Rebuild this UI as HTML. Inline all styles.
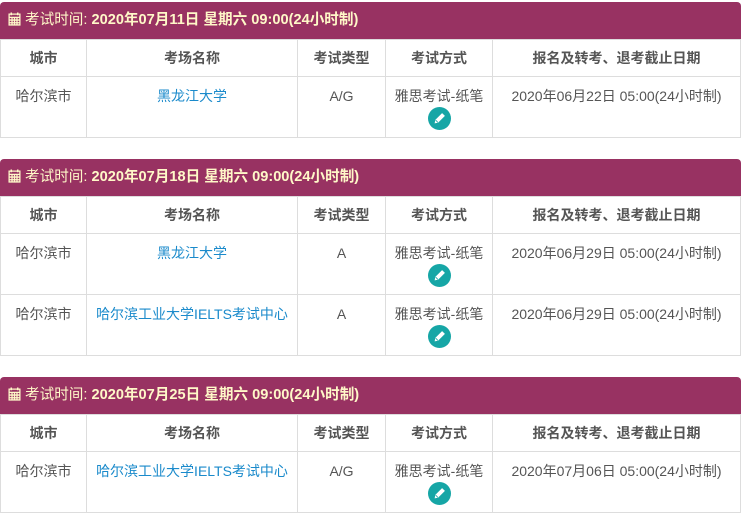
<!DOCTYPE html>
<html><head><meta charset="utf-8"><style>
*{margin:0;padding:0;box-sizing:border-box}
body{width:741px;height:508px;overflow:hidden;background:#fff;font-family:"Liberation Sans","Noto Sans CJK SC",sans-serif;font-size:14px;color:#555}
.sec{position:absolute;left:0;width:741px}
.hd{height:37px;background:#983262;border-radius:4px 4px 0 0;color:#fff8c8;font-weight:bold;font-size:14.6px;line-height:37px;padding-left:8px;white-space:nowrap}
.hd .l{font-weight:normal}
.cal{display:inline-block;vertical-align:-2px;margin-right:4px}
table{border-collapse:collapse;width:741px;table-layout:fixed}
td,th{border:1px solid #ddd;text-align:center;vertical-align:top}
th{height:37px;line-height:36px;font-weight:bold;color:#555;font-size:14px}
td{height:61px;padding-top:11px;line-height:17px}
td a{color:#1a8acb;text-decoration:none}
.p{display:block;margin:2px auto 0;width:23px;height:23px;border-radius:50%;background:#16a6a6;position:relative}
.p svg{position:absolute;left:5px;top:5px}
</style></head><body>
<svg width="0" height="0" style="position:absolute"><defs>
<symbol id="cal" viewBox="0 0 12 13"><path d="M1 2h10v10H1z M1 5h10 M1 7.5h10 M1 10h10 M3.7 5v7 M6 5v7 M8.3 5v7" fill="none" stroke="#fff8c8" stroke-width="1.2"/><path d="M3 0.5v2.5M9 0.5v2.5" stroke="#fff8c8" stroke-width="1.4"/></symbol>
<symbol id="pen" viewBox="0 0 13 13"><path d="M2 11l0.6-3 6.5-6.5 2.4 2.4-6.5 6.5z M8 2.6l2.4 2.4" fill="#fff" stroke="#fff" stroke-width="0.6"/><path d="M2.7 8.2l2.1 2.1" stroke="#16a6a6" stroke-width="0.8"/></symbol>
</defs></svg>

<div class="sec" style="top:2px">
<div class="hd"><svg class="cal" width="13" height="14"><use href="#cal"/></svg><span class="l">考试时间:</span> 2020年07月11日 星期六 09:00(24小时制)</div>
<table><colgroup><col style="width:86px"><col style="width:211px"><col style="width:88px"><col style="width:107px"><col></colgroup>
<tr><th>城市</th><th>考场名称</th><th>考试类型</th><th>考试方式</th><th>报名及转考、退考截止日期</th></tr>
<tr><td>哈尔滨市</td><td><a>黑龙江大学</a></td><td>A/G</td><td>雅思考试-纸笔<span class="p"><svg width="13" height="13"><use href="#pen"/></svg></span></td><td>2020年06月22日 05:00(24小时制)</td></tr>
</table></div>

<div class="sec" style="top:159px">
<div class="hd"><svg class="cal" width="13" height="14"><use href="#cal"/></svg><span class="l">考试时间:</span> 2020年07月18日 星期六 09:00(24小时制)</div>
<table><colgroup><col style="width:86px"><col style="width:211px"><col style="width:88px"><col style="width:107px"><col></colgroup>
<tr><th>城市</th><th>考场名称</th><th>考试类型</th><th>考试方式</th><th>报名及转考、退考截止日期</th></tr>
<tr><td>哈尔滨市</td><td><a>黑龙江大学</a></td><td>A</td><td>雅思考试-纸笔<span class="p"><svg width="13" height="13"><use href="#pen"/></svg></span></td><td>2020年06月29日 05:00(24小时制)</td></tr>
<tr><td>哈尔滨市</td><td><a>哈尔滨工业大学IELTS考试中心</a></td><td>A</td><td>雅思考试-纸笔<span class="p"><svg width="13" height="13"><use href="#pen"/></svg></span></td><td>2020年06月29日 05:00(24小时制)</td></tr>
</table></div>

<div class="sec" style="top:377px">
<div class="hd"><svg class="cal" width="13" height="14"><use href="#cal"/></svg><span class="l">考试时间:</span> 2020年07月25日 星期六 09:00(24小时制)</div>
<table><colgroup><col style="width:86px"><col style="width:211px"><col style="width:88px"><col style="width:107px"><col></colgroup>
<tr><th>城市</th><th>考场名称</th><th>考试类型</th><th>考试方式</th><th>报名及转考、退考截止日期</th></tr>
<tr><td>哈尔滨市</td><td><a>哈尔滨工业大学IELTS考试中心</a></td><td>A/G</td><td>雅思考试-纸笔<span class="p"><svg width="13" height="13"><use href="#pen"/></svg></span></td><td>2020年07月06日 05:00(24小时制)</td></tr>
</table></div>
</body></html>
